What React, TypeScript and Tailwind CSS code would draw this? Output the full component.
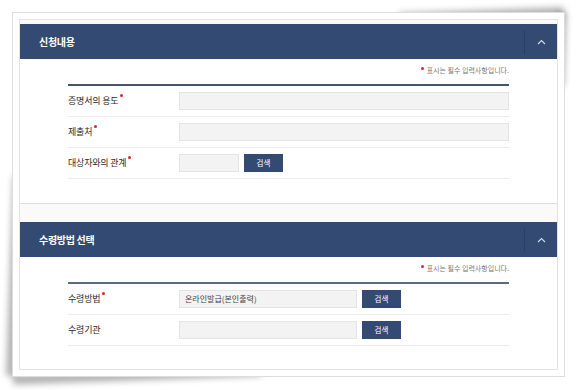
import { ReactNode } from 'react'

const NAVY = 'bg-[#334a73]'

function Chevron() {
  return (
    <svg width="9" height="6" viewBox="0 0 9 6" fill="none">
      <polyline points="1,5 4.5,1.5 8,5" stroke="#d4dbe8" strokeWidth="1.1" />
    </svg>
  )
}

function SectionHeader({ title }: { title: string }) {
  return (
    <div className={`h-[35px] ${NAVY} flex items-center shrink-0`}>
      <h2 className="pl-[19px] text-[10px] font-bold text-white tracking-[-0.3px]">{title}</h2>
      <div className="ml-auto h-[24px] w-[33px] border-l border-[#2b3f64] flex items-center justify-center">
        <Chevron />
      </div>
    </div>
  )
}

function Dot() {
  return <span className="relative -top-[7px] ml-[2px] inline-block w-[3px] h-[3px] rounded-full bg-[#d8262c]" />
}

function RequiredNote() {
  return (
    <p className="text-right text-[7px] leading-[12px] text-[#777]">
      <span className="relative -top-[3px] mr-[3px] inline-block w-[3px] h-[3px] rounded-full bg-[#d8262c]" />
      표시는 필수 입력사항입니다.
    </p>
  )
}

function Row({ label, required, children }: { label: string; required?: boolean; children: ReactNode }) {
  return (
    <div className="h-[31px] border-b border-[#ececec] flex items-center">
      <div className="w-[111px] text-[9px] text-[#2a2a2a] tracking-[-0.2px] whitespace-nowrap">
        {label}
        {required && <Dot />}
      </div>
      <div className="flex items-center">{children}</div>
    </div>
  )
}

function Field({ width, value }: { width: string; value?: string }) {
  return (
    <div className={`${width} h-[18px] bg-[#f3f3f3] border border-[#e4e4e4] flex items-center pl-[5px] text-[8px] text-[#444] whitespace-nowrap`}>
      {value}
    </div>
  )
}

function SearchButton() {
  return (
    <button className={`ml-[5px] w-[39px] h-[18px] ${NAVY} text-[7.5px] text-white flex items-center justify-center`}>
      검색
    </button>
  )
}

export default function App() {
  return (
    <div className="relative isolate w-[578px] h-[390px] bg-white pt-[12px] pl-[12px] font-['Noto_Sans_CJK_KR','Noto_Sans',sans-serif]">
      <div className="relative w-[553px] h-[365px] border border-[#dddddd] bg-white p-[6px]">
        {/* curled paper shadows */}
        <div className="absolute -z-10 left-0 bottom-0 w-[45%] h-[10px] bg-black/30 blur-[3px] origin-right -rotate-[2deg]" />
        <div className="absolute -z-10 left-0 bottom-0 w-[10px] h-[55%] bg-black/30 blur-[3px] origin-top rotate-[2deg]" />
        <div className="absolute -z-10 right-0 top-0 w-[30%] h-[10px] bg-black/30 blur-[3px] origin-left -rotate-[2deg]" />
        <div className="absolute -z-10 right-0 top-0 w-[10px] h-[20%] bg-black/30 blur-[3px] origin-bottom rotate-[2deg]" />

        <div className="h-full border border-[#e3e3e3] bg-[#fafafa] pt-[4px] flex flex-col">
          <SectionHeader title="신청내용" />
          <div className="bg-white border-b border-[#dddddd] px-[48px] pt-[5px] pb-[24px]">
            <RequiredNote />
            <div className="mt-[8px] border-t-2 border-[#46546b]">
              <Row label="증명서의 용도" required>
                <Field width="w-[330px]" />
              </Row>
              <Row label="제출처" required>
                <Field width="w-[330px]" />
              </Row>
              <Row label="대상자와의 관계" required>
                <Field width="w-[60px]" />
                <SearchButton />
              </Row>
            </div>
          </div>

          <div className="h-[18px] shrink-0" />

          <SectionHeader title="수령방법 선택" />
          <div className="flex-1 bg-white px-[48px] pt-[5px]">
            <RequiredNote />
            <div className="mt-[8px] border-t-2 border-[#5a6880]">
              <Row label="수령방법" required>
                <Field width="w-[178px]" value="온라인발급(본인출력)" />
                <SearchButton />
              </Row>
              <Row label="수령기관">
                <Field width="w-[178px]" />
                <SearchButton />
              </Row>
            </div>
          </div>
        </div>
      </div>
    </div>
  )
}
